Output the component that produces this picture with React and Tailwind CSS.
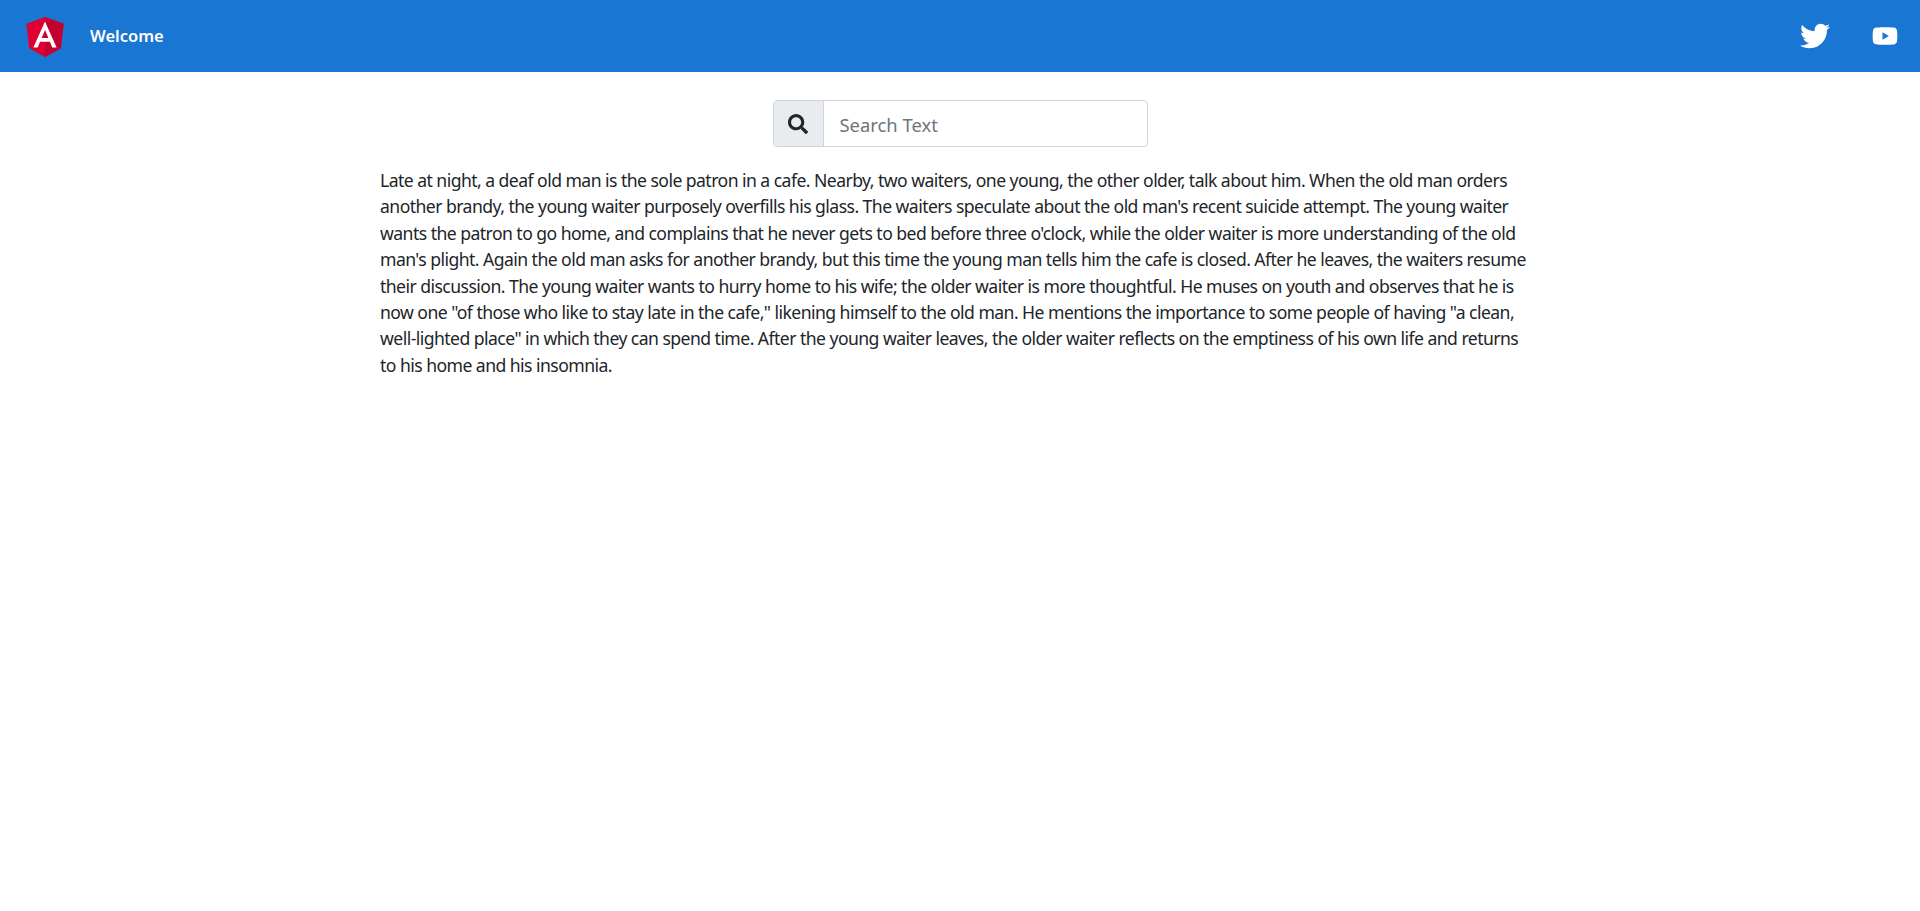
import { FaSearch, FaTwitter, FaYoutube } from 'react-icons/fa';

const story = `Late at night, a deaf old man is the sole patron in a cafe. Nearby, two waiters, one young, the other older, talk about him. When the old man orders another brandy, the young waiter purposely overfills his glass. The waiters speculate about the old man's recent suicide attempt. The young waiter wants the patron to go home, and complains that he never gets to bed before three o'clock, while the older waiter is more understanding of the old man's plight. Again the old man asks for another brandy, but this time the young man tells him the cafe is closed. After he leaves, the waiters resume their discussion. The young waiter wants to hurry home to his wife; the older waiter is more thoughtful. He muses on youth and observes that he is now one "of those who like to stay late in the cafe," likening himself to the old man. He mentions the importance to some people of having "a clean, well-lighted place" in which they can spend time. After the young waiter leaves, the older waiter reflects on the emptiness of his own life and returns to his home and his insomnia.`;

function AngularLogo() {
  return (
    <svg viewBox="0 0 250 250" className="w-[50px] h-[50px] shrink-0">
      <polygon fill="#DD0031" points="125,30 31.9,63.2 46.1,186.3 125,230 203.9,186.3 218.1,63.2" />
      <polygon fill="#C3002F" points="125,30 125,230 203.9,186.3 218.1,63.2" />
      <path
        fill="#FFFFFF"
        d="M125,52.1L66.8,182.6h21.7l11.7-29.2h49.4l11.7,29.2h21.7L125,52.1z M142,135.4H108l17-40.9L142,135.4z"
      />
    </svg>
  );
}

export default function App() {
  return (
    <div className="min-h-[911px] bg-white font-['Noto_Sans',sans-serif] text-[#212529]">
      <header className="h-[72px] bg-[#1976d2] flex items-center pl-5 pr-[22px] text-white">
        <AngularLogo />
        <span className="ml-5 text-[16.5px] font-semibold">Welcome</span>
        <div className="ml-auto flex items-center gap-[42px]">
          <FaTwitter className="w-[30px] h-[30px]" />
          <FaYoutube className="w-[26px] h-[26px]" />
        </div>
      </header>

      <main className="w-[1160px] mx-auto">
        <div className="flex justify-center mt-7">
          <div className="flex w-[375px] h-[47px] rounded border border-[#ced4da] overflow-hidden">
            <div className="w-[50px] shrink-0 flex items-center justify-center bg-[#e9ecef] border-r border-[#ced4da]">
              <FaSearch className="w-5 h-5 text-[#212529]" />
            </div>
            <input
              placeholder="Search Text"
              className="flex-1 min-w-0 px-4 pt-[2px] text-[18.4px] outline-none placeholder:text-[#6c757d]"
            />
          </div>
        </div>
        <p className="mt-5 max-w-[1150px] text-[17.6px] leading-[26.4px] tracking-[-0.55px]">{story}</p>
      </main>
    </div>
  );
}
